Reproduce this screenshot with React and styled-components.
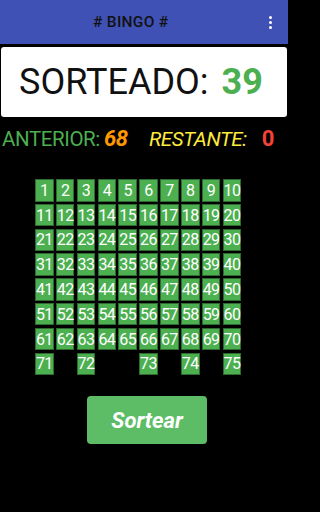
import React from 'react';
import styled, { createGlobalStyle } from 'styled-components';

const GlobalStyle = createGlobalStyle`
  html, body {
    margin: 0;
    padding: 0;
    background: #000;
    min-height: 100%;
    font-family: Roboto, "Liberation Sans", sans-serif;
  }
`;

const Screen = styled.div`
  width: 288px;
  height: 512px;
  background: #000;
  display: flex;
  flex-direction: column;
  overflow: hidden;
`;

const Toolbar = styled.header`
  height: 44px;
  background: #3f51b5;
  display: flex;
  align-items: center;
  justify-content: space-between;
  padding: 0 14px 0 93px;
`;

const Title = styled.h1`
  margin: 0;
  font-size: 15.5px;
  font-weight: 500;
  color: #111;
  letter-spacing: 0.3px;
`;

const MenuButton = styled.div`
  width: 8px;
  display: flex;
  flex-direction: column;
  align-items: center;
  gap: 2px;
`;

const Dot = styled.span`
  width: 3px;
  height: 3px;
  border-radius: 50%;
  background: #fff;
`;

const DrawnBox = styled.div`
  margin: 3px 1px 0;
  height: 70px;
  background: #fff;
  border-radius: 3px;
  display: flex;
  align-items: center;
  justify-content: center;
  font-size: 36px;
  color: #111;
  padding-right: 6px;
`;

const Drawn = styled.span`
  color: #4caf50;
  font-weight: 700;
  margin-left: 13px;
`;

const Stats = styled.div`
  display: flex;
  justify-content: space-between;
  align-items: baseline;
  padding: 9px 14px 0 2px;
  font-size: 20.5px;
  letter-spacing: -0.4px;
  height: 40px;
  box-sizing: border-box;
`;

const Stat = styled.div`
  display: flex;
  align-items: baseline;
  gap: ${(p) => p.gap}px;
`;

const Label = styled.span`
  color: ${(p) => p.color};
  font-style: ${(p) => (p.italic ? 'italic' : 'normal')};
`;

const Value = styled.span`
  color: ${(p) => p.color};
  font-size: 22px;
  font-weight: 700;
  font-style: ${(p) => (p.italic ? 'italic' : 'normal')};
`;

const Board = styled.div`
  margin: 22px 0 0 35px;
  display: grid;
  grid-template-columns: repeat(10, 18.6px);
  grid-auto-rows: 22.5px;
  column-gap: 2.25px;
  row-gap: 2.3px;
`;

const Cell = styled.div`
  grid-column-start: ${(p) => p.col || 'auto'};
  background: #4caf50;
  box-shadow: inset 0 0 0 1px #2f6b31;
  color: #fff;
  font-size: 16px;
  letter-spacing: -0.6px;
  display: flex;
  align-items: center;
  justify-content: center;
  white-space: nowrap;
`;

const Footer = styled.div`
  display: flex;
  justify-content: center;
  padding: 21px 0 0 6px;
`;

const DrawButton = styled.button`
  width: 120px;
  height: 48px;
  border: none;
  border-radius: 4px;
  background: #5cbd66;
  color: #fff;
  font-family: inherit;
  font-size: 22px;
  font-weight: 700;
  font-style: italic;
`;

const lastRow = [
  { n: 71, col: 1 },
  { n: 72, col: 3 },
  { n: 73, col: 6 },
  { n: 74, col: 8 },
  { n: 75, col: 10 },
];

export default function App() {
  const numbers = Array.from({ length: 70 }, (_, i) => i + 1);

  return (
    <Screen>
      <GlobalStyle />
      <Toolbar>
        <Title># BINGO #</Title>
        <MenuButton>
          <Dot />
          <Dot />
          <Dot />
        </MenuButton>
      </Toolbar>
      <DrawnBox>
        SORTEADO:<Drawn>39</Drawn>
      </DrawnBox>
      <Stats>
        <Stat gap={4}>
          <Label color="#4caf50">ANTERIOR:</Label>
          <Value color="#ff9800" italic>68</Value>
        </Stat>
        <Stat gap={15}>
          <Label color="#ffeb3b" italic>RESTANTE:</Label>
          <Value color="#f44336">0</Value>
        </Stat>
      </Stats>
      <Board>
        {numbers.map((n) => (
          <Cell key={n}>{n}</Cell>
        ))}
        {lastRow.map((c) => (
          <Cell key={c.n} col={c.col}>{c.n}</Cell>
        ))}
      </Board>
      <Footer>
        <DrawButton>Sortear</DrawButton>
      </Footer>
    </Screen>
  );
}
